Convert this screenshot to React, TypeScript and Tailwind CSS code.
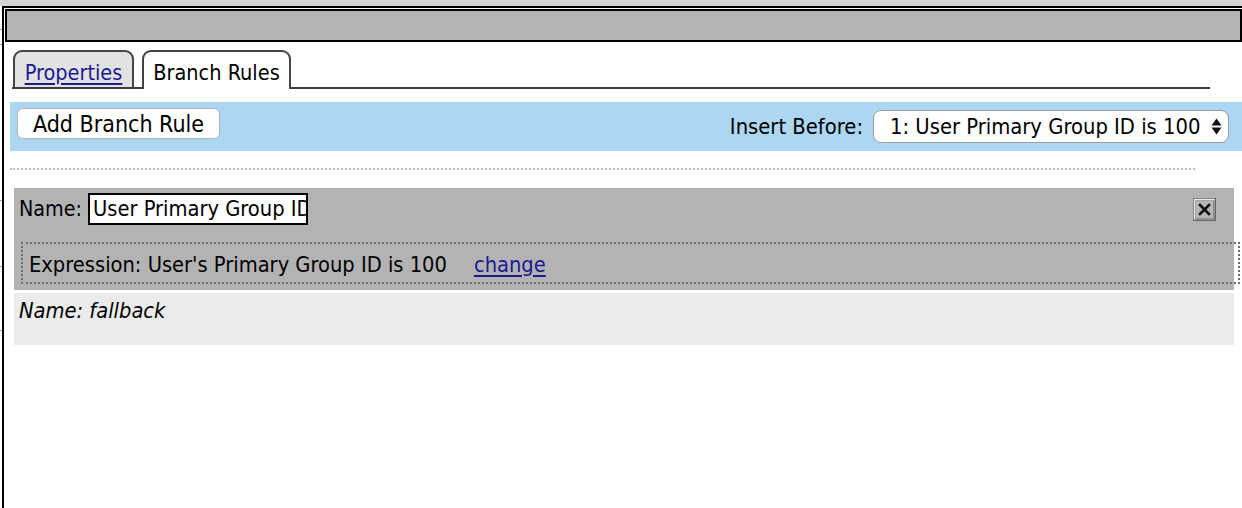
import React from "react";

function CloseIcon() {
  return (
    <svg width="23" height="23" viewBox="0 0 23 23">
      <rect x="0.5" y="0.5" width="22" height="22" fill="#8f8f8f" stroke="#666" />
      <path d="M1.5 21.5 V1.5 H21.5" fill="none" stroke="#e8e8e8" strokeWidth="1.5" />
      <rect x="3" y="3" width="17" height="17" fill="#b6b6b6" />
      <path d="M7 7 L16 16 M16 7 L7 16" stroke="#111" strokeWidth="2.6" strokeLinecap="square" />
    </svg>
  );
}

export default function App() {
  return (
    <div className="relative w-[1242px] h-[508px] overflow-hidden bg-white text-black font-['DejaVu_Sans_Condensed','Liberation_Sans',sans-serif] flex flex-col">
      {/* background ticks on far left */}
      <div className="absolute left-0 top-[29px] w-[2px] h-[1px] bg-[#999]" />
      <div className="absolute left-0 top-[44px] w-[2px] h-[1px] bg-[#999]" />
      <div className="absolute left-0 top-[200px] w-[2px] h-[1px] bg-[#999]" />
      <div className="absolute left-0 top-[266px] w-[2px] h-[1px] bg-[#999]" />
      <div className="absolute left-0 top-[330px] w-[2px] h-[1px] bg-[#999]" />

      <div className="h-[6px] bg-[#d6d6d6] shrink-0" />
      <div className="ml-[2px] flex-1 border-l-2 border-t-2 border-black flex flex-col">
        {/* title bar */}
        <div className="ml-[1px] mt-[1px] h-[33px] border-2 border-black bg-[#b3b3b3]" />

        {/* tabs */}
        <div className="mt-[8px] ml-[8px] w-[1198px] h-[39px] border-b-2 border-[#3c3c3c] flex items-end pl-[1px] gap-[8px]">
          <div className="w-[121px] h-[37px] border-2 border-b-0 border-[#444] rounded-t-[9px] bg-[#e2e2e2] flex items-center justify-center pt-[6px]">
            <span className="text-[21.5px] leading-none text-[#1a1a90] underline underline-offset-[3px] decoration-[2px]">Properties</span>
          </div>
          <div className="w-[149px] h-[39px] -mb-[2px] border-2 border-b-0 border-[#444] rounded-t-[9px] bg-white flex items-center justify-center pt-[4px]">
            <span className="text-[21.5px] leading-none">Branch Rules</span>
          </div>
        </div>

        {/* blue toolbar */}
        <div className="mt-[13px] ml-[6px] h-[49px] bg-[#acd6f2] flex items-start justify-between pl-[7px] pr-[13px]">
          <button className="mt-[6px] w-[203px] h-[31px] bg-white border border-[#b5b5b5] rounded-[6px] text-[23px] leading-none flex items-center justify-center pt-[2px]">
            Add Branch Rule
          </button>
          <div className="mt-[8px] flex items-center gap-[10px]">
            <span className="text-[21.8px] leading-none mt-[1px]">Insert Before:</span>
            <div className="w-[356px] h-[33px] bg-white border border-[#9c9c9c] rounded-[8px] flex items-center pl-[16px] pr-[6px] justify-between">
              <span className="text-[21.8px] leading-none pt-[1px]">1: User Primary Group ID is 100</span>
              <svg width="11" height="19" viewBox="0 0 11 19">
                <path d="M0.5 8.5 L5.5 1.5 L10.5 8.5 Z" fill="#111" />
                <path d="M0.5 10.5 L5.5 17.5 L10.5 10.5 Z" fill="#111" />
              </svg>
            </div>
          </div>
        </div>

        {/* dotted separator */}
        <div className="mt-[17px] ml-[6px] w-[1185px] border-t-2 border-dotted border-[#bdbdbd]" />

        {/* rule block */}
        <div className="mt-[18px] ml-[10px] w-[1220px] h-[102px] bg-[#b3b3b3] flex flex-col pt-[5px]">
          <div className="flex items-start pl-[5px] pr-[18px]">
            <span className="text-[21.3px] leading-none mt-[5px]">Name:</span>
            <div className="ml-[6px] w-[220px] h-[32px] border-2 border-black bg-white overflow-hidden flex items-center pl-[3px]">
              <span className="text-[21.7px] leading-none whitespace-nowrap">User Primary Group ID</span>
            </div>
            <div className="ml-auto mt-[5px]">
              <CloseIcon />
            </div>
          </div>
          <div className="mt-[17px] ml-[7px] w-[1219px] h-[42px] border-2 border-dotted border-[#6e6e6e] flex items-center pl-[6px] pt-[3px]">
            <span className="text-[21.7px] leading-none">Expression: User's Primary Group ID is 100</span>
            <a href="#" className="ml-[27px] text-[21.7px] leading-none text-[#1a1a90] underline underline-offset-[3px] decoration-[2px]">change</a>
          </div>
        </div>

        {/* fallback */}
        <div className="mt-[3px] ml-[10px] w-[1220px] h-[52px] bg-[#ebebeb] pl-[5px] pt-[7px]">
          <span className="text-[21.7px] leading-none italic">Name: fallback</span>
        </div>
      </div>
    </div>
  );
}
